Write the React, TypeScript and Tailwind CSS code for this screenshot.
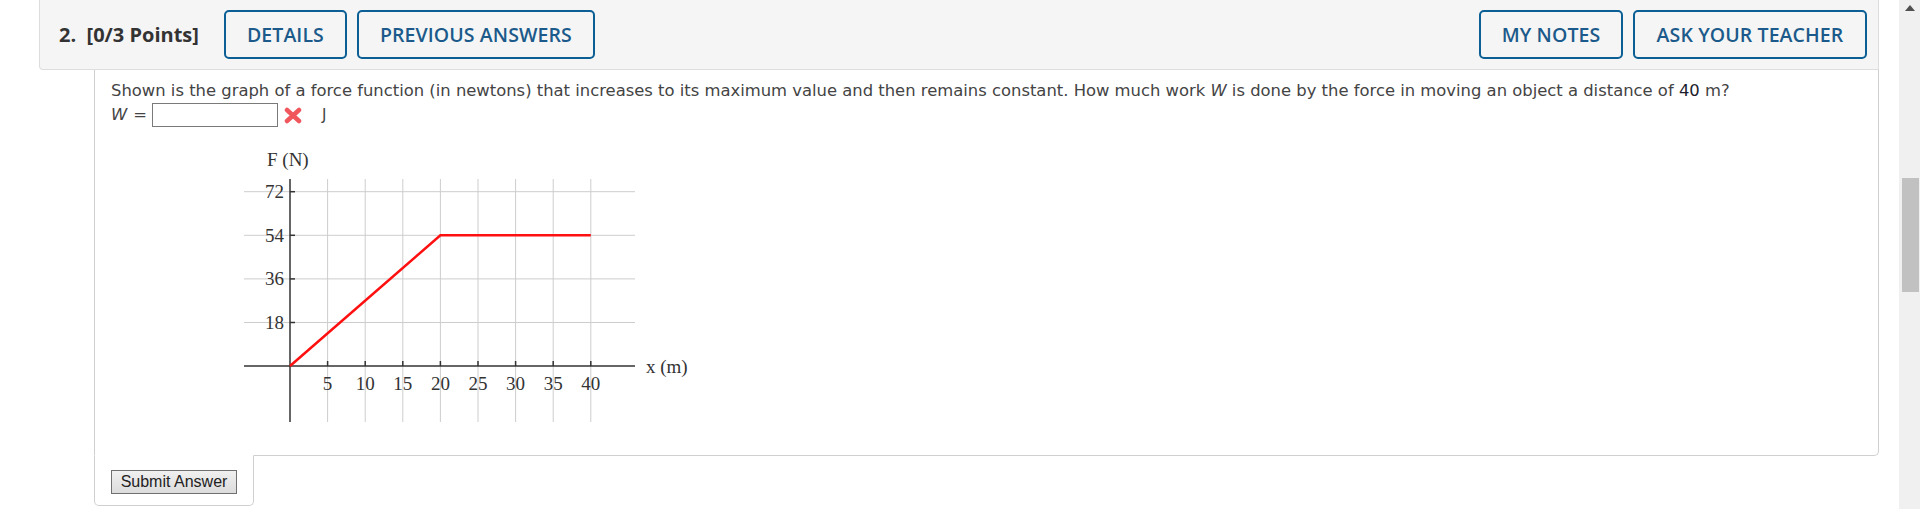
import React from "react";

const yTicks = [
  { v: 72, y: 46.7 },
  { v: 54, y: 90.3 },
  { v: 36, y: 133.9 },
  { v: 18, y: 177.5 },
];

const xTicks = [5, 10, 15, 20, 25, 30, 35, 40].map((v, i) => ({
  v,
  x: 50 + (i + 1) * 37.6,
}));

const ForceGraph = () => {
  return (
    <svg width={460} height={285} viewBox="0 0 460 285" className="block">
      <g fontFamily="'Liberation Serif', 'Times New Roman', serif" fontSize={19} fill="#333">
        {/* grid */}
        {yTicks.map((t) => (
          <line key={t.v} x1={4} x2={395} y1={t.y} y2={t.y} stroke="#cdcdcd" strokeWidth={1} />
        ))}
        {xTicks.map((t) => (
          <line key={t.v} x1={t.x} x2={t.x} y1={34} y2={277} stroke="#cdcdcd" strokeWidth={1} />
        ))}

        {/* axes */}
        <line x1={4} x2={395} y1={221} y2={221} stroke="#333" strokeWidth={1.5} />
        <line x1={50} x2={50} y1={34} y2={277} stroke="#333" strokeWidth={1.5} />
        {yTicks.map((t) => (
          <line key={t.v} x1={50} x2={55} y1={t.y} y2={t.y} stroke="#333" strokeWidth={1.5} />
        ))}
        {xTicks.map((t) => (
          <line key={t.v} x1={t.x} x2={t.x} y1={216} y2={221} stroke="#333" strokeWidth={1.5} />
        ))}

        {/* labels */}
        <text x={27} y={21}>F (N)</text>
        <text x={406} y={228}>x (m)</text>
        {yTicks.map((t) => (
          <text key={t.v} x={44} y={t.y + 6.5} textAnchor="end">
            {t.v}
          </text>
        ))}
        {xTicks.map((t) => (
          <text key={t.v} x={t.x} y={245} textAnchor="middle">
            {t.v}
          </text>
        ))}

        {/* force function */}
        <polyline
          points="50,221 200.4,90.3 350.8,90.3"
          fill="none"
          stroke="#ff1010"
          strokeWidth={2.5}
        />
      </g>
    </svg>
  );
};

const HeaderButton = ({ label, width }: { label: string; width: string }) => (
  <button
    className={`${width} h-[49px] border-2 border-[#0b5f95] rounded-[5px] text-[#1b5a8a] font-semibold text-[19.5px] tracking-[0.1px]`}
  >
    {label}
  </button>
);

const App = () => {
  return (
    <div className="flex w-[1920px] h-[509px] overflow-hidden bg-white">
      <div className="w-[1899px]">
        {/* question header */}
        <div
          className="ml-[39px] w-[1840px] h-[70px] bg-[#f5f5f5] border-b border-l border-r border-[#dddddd] rounded-bl-[4px] flex items-center pl-[19px] pr-[11px]"
          style={{ fontFamily: "'Open Sans', 'Noto Sans', sans-serif" }}
        >
          <span className="font-bold text-[20px] text-[#333] whitespace-pre">2.  [0/3 Points]</span>
          <div className="flex gap-[10px] ml-[25px]">
            <HeaderButton label="DETAILS" width="w-[123px]" />
            <HeaderButton label="PREVIOUS ANSWERS" width="w-[238px]" />
          </div>
          <div className="flex gap-[10px] ml-auto">
            <HeaderButton label="MY NOTES" width="w-[144px]" />
            <HeaderButton label="ASK YOUR TEACHER" width="w-[234px]" />
          </div>
        </div>

        {/* question body */}
        <div className="ml-[94px] w-[1785px]">
          <div
            className="h-[386px] border-l border-r border-b border-[#cfcfcf] rounded-br-[5px] pt-[9px] pl-[16px] text-[16.4px] leading-[24px] text-[#444]"
            style={{ fontFamily: "'DejaVu Sans', Verdana, sans-serif" }}
          >
            <p>
              Shown is the graph of a force function (in newtons) that increases to its maximum value and then remains
              constant. How much work <i>W</i> is done by the force in moving an object a distance of{" "}
              <span className="text-[#1c1c2c]">40</span> m?
            </p>
            <div className="flex items-center h-[24px]">
              <i>W</i>
              <span className="ml-[6px]">=</span>
              <input
                type="text"
                className="ml-[5px] w-[126px] h-[24px] border border-[#7a7a7a] bg-white outline-none"
              />
              <svg width={18} height={17} viewBox="0 0 18 17" className="ml-[6px]">
                <path d="M3 3 L15 14 M15 3 L3 14" stroke="#f0575d" strokeWidth={4.5} strokeLinecap="round" />
              </svg>
              <span className="ml-[20px] text-[15px]">J</span>
            </div>
            <div className="mt-[18px] ml-[129px]">
              <ForceGraph />
            </div>
          </div>
          <div className="-mt-px w-[160px] h-[51px] border-l border-r border-b border-t border-[#cfcfcf] border-t-white rounded-b-[5px] bg-white pl-[16px] pt-[13px]">
            <button
              className="w-[126px] h-[24px] border border-[#707070] bg-gradient-to-b from-[#f0f0f0] to-[#dcdcdc] text-[16px] leading-[20px] text-[#222]"
              style={{ fontFamily: "'Liberation Sans', Arial, sans-serif" }}
            >
              Submit Answer
            </button>
          </div>
        </div>
      </div>

      {/* scrollbar */}
      <div className="w-[21px] h-[509px] bg-[#f0f0f0] flex flex-col items-center">
        <svg width={10} height={6} viewBox="0 0 10 6" className="mt-[5px] ml-[1px]">
          <path d="M0 6 L5 0 L10 6 Z" fill="#505050" />
        </svg>
        <div className="mt-[167px] ml-[1px] w-[17px] h-[114px] bg-[#c1c1c1]" />
      </div>
    </div>
  );
};

export default App;
